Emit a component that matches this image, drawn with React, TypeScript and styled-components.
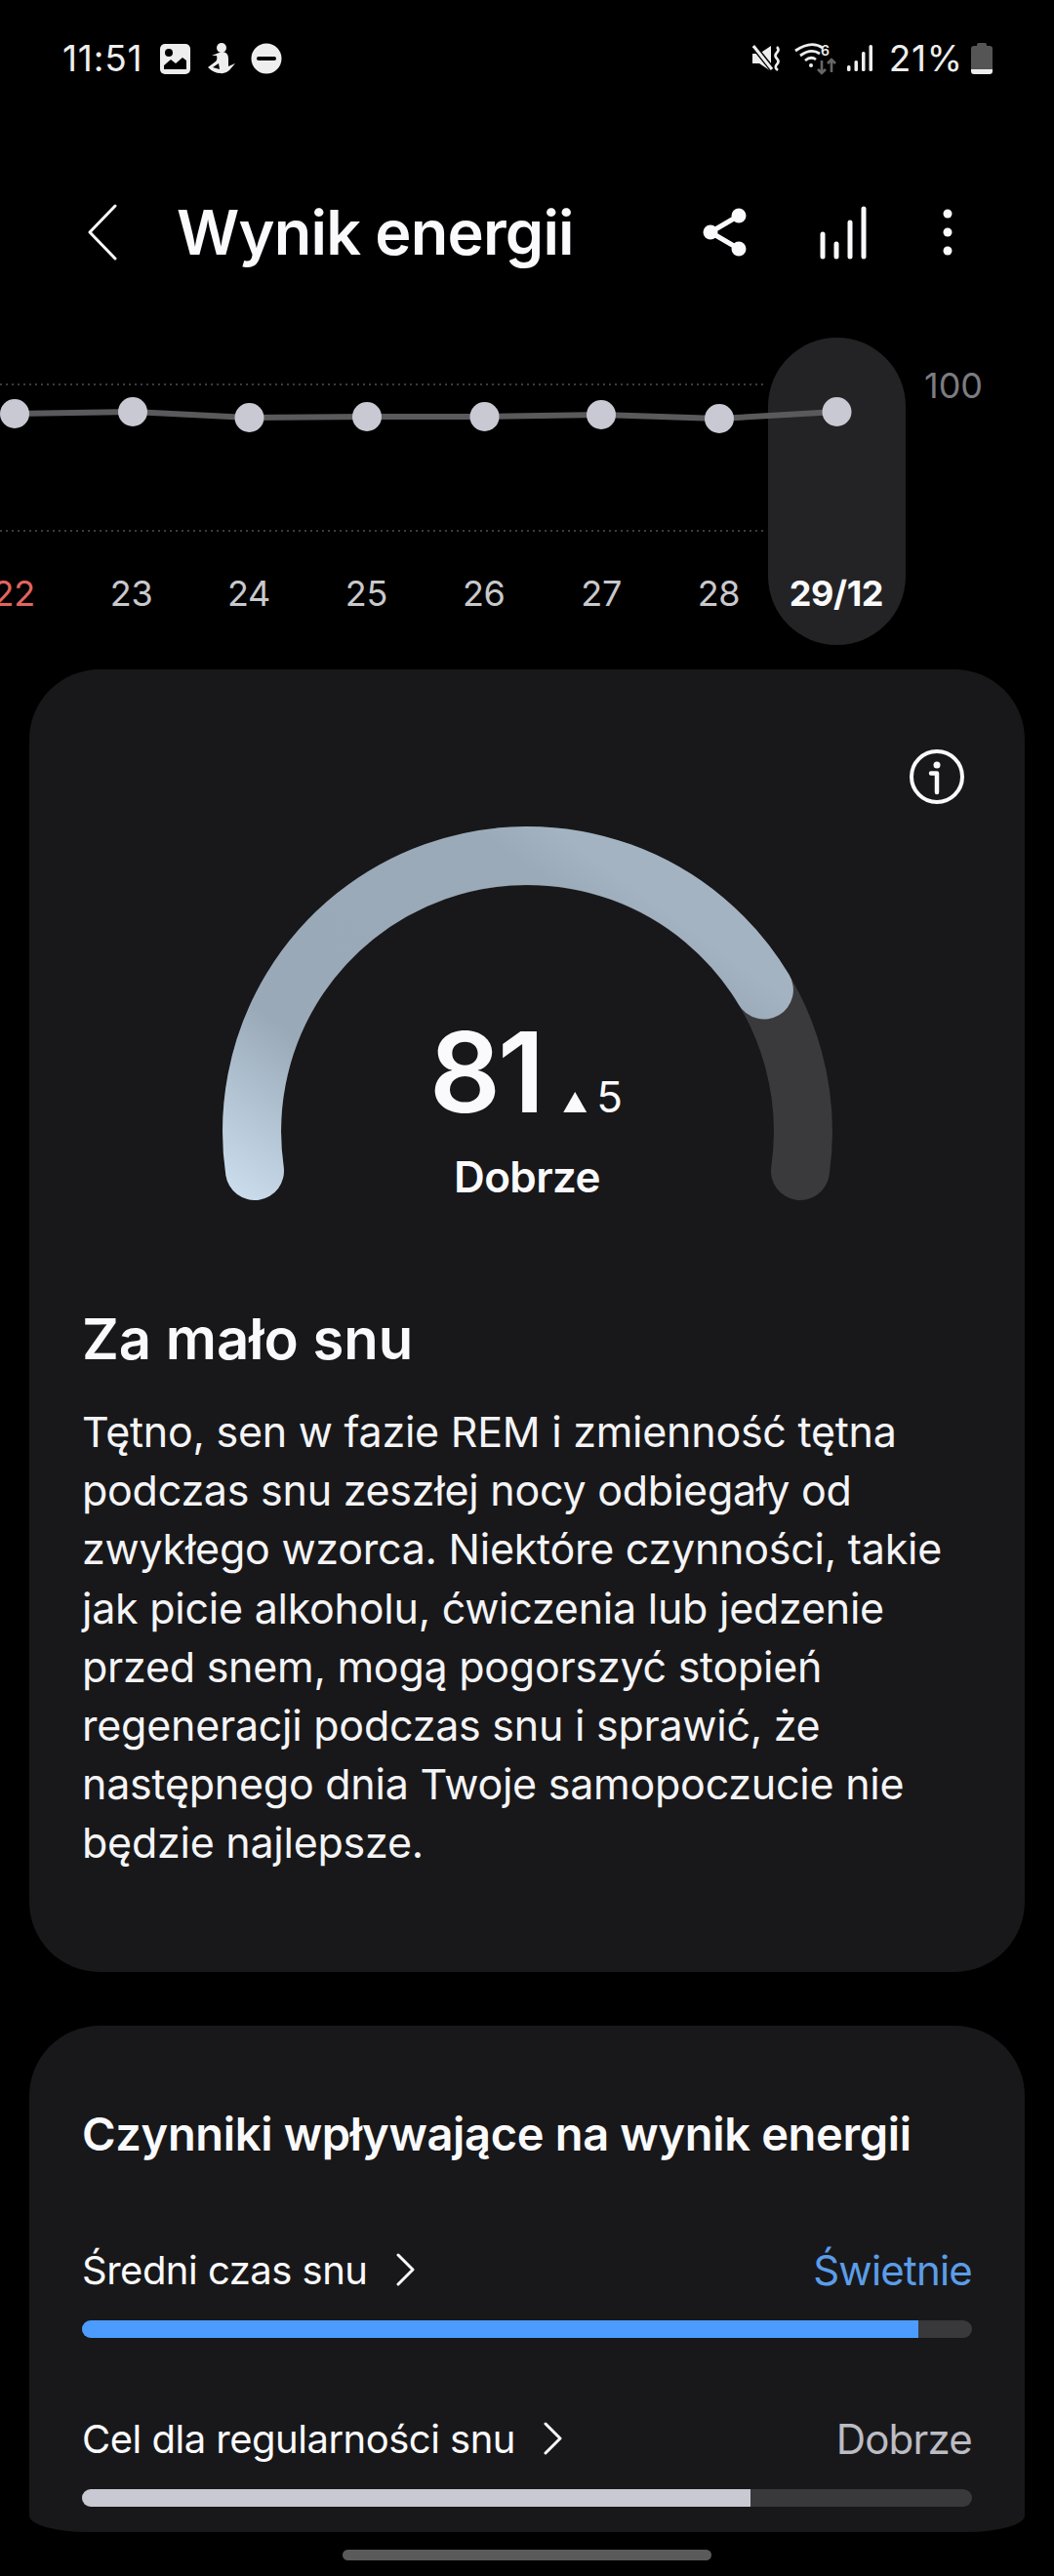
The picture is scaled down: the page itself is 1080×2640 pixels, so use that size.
import React from "react";
import styled, { createGlobalStyle } from "styled-components";

const FONT = `Inter, "Noto Sans", sans-serif`;

const GlobalStyle = createGlobalStyle`
  html, body {
    margin: 0;
    padding: 0;
    background: #000;
  }
  * {
    box-sizing: border-box;
  }
`;

const Page = styled.div`
  width: 1080px;
  height: 2640px;
  position: relative;
  overflow: hidden;
  background: #000;
  font-family: ${FONT};
  color: #fafafc;
`;

const StatusBar = styled.div`
  height: 116px;
  padding: 42px 63px 0 64px;
  display: flex;
  align-items: flex-start;
  justify-content: space-between;
`;

const StatusGroup = styled.div`
  height: 36px;
  display: flex;
  align-items: center;
  color: #eeeeee;
`;

const StatusText = styled.span`
  font-size: 37px;
  letter-spacing: 0.8px;
  line-height: 36px;
`;

const LeftIcons = styled.svg`
  margin-left: 17px;
`;

const RightIcons = styled.svg`
  margin-right: 16px;
`;

const Battery = styled.svg`
  margin-left: 8px;
`;

const TopBar = styled.div`
  height: 176px;
  padding: 68px 100px 0 90px;
  display: flex;
  align-items: center;
`;

const Title = styled.h1`
  margin: 0 0 0 61px;
  font-size: 63px;
  font-weight: 600;
  letter-spacing: -0.8px;
  flex: 1;
`;

const Chart = styled.div`
  position: relative;
  height: 394px;
`;

const Highlight = styled.div`
  position: absolute;
  left: 787px;
  top: 54px;
  width: 141px;
  height: 315px;
  border-radius: 71px;
  background: #232325;
`;

const ChartLines = styled.svg`
  position: absolute;
  left: 0;
  top: 0;
`;

const MaxLabel = styled.span`
  position: absolute;
  left: 947px;
  top: 81px;
  font-size: 36px;
  line-height: 44px;
  color: #7c7c80;
`;

const DayRow = styled.div`
  position: absolute;
  left: -46px;
  top: 294px;
  display: grid;
  grid-template-columns: repeat(8, 120.4px);
`;

const Day = styled.span<{ $tone?: "red" | "active" }>`
  text-align: center;
  font-size: 36px;
  line-height: 44px;
  font-weight: ${(p) => (p.$tone === "active" ? 700 : 400)};
  letter-spacing: ${(p) => (p.$tone === "active" ? "-0.4px" : "-0.3px")};
  color: ${(p) =>
    p.$tone === "red" ? "#e2655f" : p.$tone === "active" ? "#fafafc" : "#c9c9cc"};
`;

const Card = styled.section`
  margin: 0 30px;
  background: #18181a;
  border-radius: 72px;
`;

const ScoreCard = styled(Card)`
  height: 1335px;
  padding: 154px 54px 0;
  position: relative;
`;

const InfoButton = styled.svg`
  position: absolute;
  right: 62px;
  top: 82px;
`;

const Gauge = styled.div`
  position: relative;
  width: 640px;
  height: 400px;
  margin: 0 auto;
`;

const GaugeSvg = styled.svg`
  display: block;
`;

const GaugeCenter = styled.div`
  position: absolute;
  left: 0;
  right: 0;
  top: 199px;
  display: flex;
  flex-direction: column;
  align-items: center;
`;

const ScoreRow = styled.div`
  display: flex;
  align-items: baseline;
  padding-right: 2px;
`;

const Score = styled.span`
  font-size: 114px;
  font-weight: 600;
  line-height: 120px;
  letter-spacing: -3px;
`;

const DeltaArrow = styled.span`
  width: 24px;
  height: 21px;
  margin: 0 10px 0 22px;
  background: #fafafc;
  clip-path: polygon(50% 0, 100% 100%, 0 100%);
`;

const Delta = styled.span`
  font-size: 44px;
  line-height: 44px;
`;

const ScoreLabel = styled.span`
  font-size: 44px;
  font-weight: 600;
  line-height: 56px;
  margin-top: 19px;
  letter-spacing: -0.6px;
`;

const Message = styled.div`
  margin-top: 97px;
`;

const MessageTitle = styled.h2`
  margin: 0;
  font-size: 58px;
  line-height: 70px;
  font-weight: 600;
`;

const MessageBody = styled.p`
  margin: 30px 0 0;
  font-size: 43px;
  line-height: 60.2px;
  font-weight: 400;
  letter-spacing: -0.25px;
  color: #f4f4f6;
  white-space: pre-line;
`;

const FactorsCard = styled(Card)`
  margin-top: 55px;
  height: 519px;
  padding: 80px 54px 0;
  border-radius: 72px 72px 60px 60px / 72px 72px 17px 17px;
`;

const FactorsTitle = styled.h2`
  margin: 0 0 80px;
  font-size: 47px;
  line-height: 62px;
  font-weight: 600;
  letter-spacing: -0.33px;
`;

const Factor = styled.div`
  margin-bottom: 75px;
`;

const FactorHead = styled.div`
  height: 56px;
  display: flex;
  align-items: center;
  justify-content: space-between;
  margin-bottom: 24px;
`;

const FactorName = styled.div`
  display: flex;
  align-items: center;
  gap: 28px;
  font-size: 40px;
  letter-spacing: -0.5px;
`;

const FactorRating = styled.span<{ $color: string }>`
  font-size: 42px;
  letter-spacing: -0.8px;
  color: ${(p) => p.$color};
`;

const Track = styled.div`
  height: 18px;
  border-radius: 9px;
  overflow: hidden;
  background: #39393b;
`;

const Fill = styled.div<{ $color: string }>`
  height: 100%;
  background: ${(p) => p.$color};
`;

const HomeIndicator = styled.div`
  position: absolute;
  left: 351px;
  top: 2613px;
  width: 378px;
  height: 11px;
  border-radius: 6px;
  background: #5a5a5a;
`;

const days = ["22", "23", "24", "25", "26", "27", "28", "29/12"];
const points = [
  [15, 424],
  [136, 422],
  [255.5, 428],
  [376, 427],
  [496.5, 427],
  [616, 425],
  [737, 429],
  [857.5, 422],
];

const factors = [
  { name: "Średni czas snu", rating: "Świetnie", ratingColor: "#5b9de8", fill: "#4c9cff", pct: 94 },
  { name: "Cel dla regularności snu", rating: "Dobrze", ratingColor: "#bcbcc4", fill: "#c8c9d3", pct: 75.1 },
];

const body = `Tętno, sen w fazie REM i zmienność tętna
podczas snu zeszłej nocy odbiegały od
zwykłego wzorca. Niektóre czynności, takie
jak picie alkoholu, ćwiczenia lub jedzenie
przed snem, mogą pogorszyć stopień
regeneracji podczas snu i sprawić, że
następnego dnia Twoje samopoczucie nie
będzie najlepsze.`;

function LeftStatusIcons() {
  return (
    <LeftIcons width="130" height="36" viewBox="0 0 130 36">
      <rect x="1" y="3" width="31" height="31" rx="5" fill="#eee" />
      <circle cx="10" cy="12" r="4" fill="#000" />
      <path d="M5 29 v-4 l7-6 5 4 7-6 4 3 v9 z" fill="#000" />
      <circle cx="64" cy="7" r="5" fill="#eee" />
      <path d="M54 15 L64 11 Q71 11 71 18 L71 26 L78 23 L72 30 Q68 34 63 33 Q56 33 50 27 L58 21 Q60 19 59 15 Z" fill="#eee" />
      <path d="M55 27 L61 23 L62 29 Z" fill="#000" />
      <circle cx="110" cy="18" r="15.5" fill="#eee" />
      <rect x="100" y="16" width="20" height="4" rx="2" fill="#000" />
    </LeftIcons>
  );
}

function RightStatusIcons() {
  return (
    <RightIcons width="124" height="36" viewBox="0 0 124 36">
      <path d="M0 13 h7 l12-8 v26 l-12-8 h-7 z" fill="#eee" />
      <path d="M1 5 L21 30" stroke="#000" strokeWidth="6" />
      <path d="M1 5 L20 29" stroke="#eee" strokeWidth="3" />
      <path d="M25 6 q3 3 0 6 q-3 3 0 6 q3 3 0 6 q-3 3 1 6" stroke="#eee" strokeWidth="2.6" fill="none" />
      <path d="M44 10 Q60 -1 72 7 M49 15 Q60 7 69 13 M54 20 Q60 15 65 19" stroke="#eee" strokeWidth="2.8" fill="none" />
      <circle cx="60" cy="25" r="2" fill="#eee" />
      <text x="70" y="15" fontSize="14" fontWeight="600" fill="#eee" fontFamily={FONT}>6</text>
      <path d="M71 20 v13 M67 29 l4 4 4-4" stroke="#666" strokeWidth="2.6" fill="none" />
      <path d="M81 32 v-13 M77 23 l4-4 4 4" stroke="#666" strokeWidth="2.6" fill="none" />
      <rect x="97" y="25" width="3.5" height="6" rx="1.5" fill="#eee" />
      <rect x="104.5" y="20" width="3.5" height="11" rx="1.5" fill="#eee" />
      <rect x="112" y="11" width="3.5" height="20" rx="1.5" fill="#eee" />
      <rect x="119.5" y="4" width="3.5" height="27" rx="1.5" fill="#eee" />
    </RightIcons>
  );
}

function BatteryIcon() {
  return (
    <Battery width="22" height="32" viewBox="0 0 22 32">
      <path d="M6 2 q0-2 2-2 h6 q2 0 2 2 v1 h3 q3 0 3 3 v21 h-22 v-21 q0-3 3-3 h3 z" fill="#555" />
      <path d="M0 27 h22 v2 q0 3 -3 3 h-16 q-3 0 -3-3 z" fill="#eee" />
    </Battery>
  );
}

function HeaderIcons() {
  return (
    <svg width="262" height="60" viewBox="0 0 262 60">
      <g transform="translate(-718,-208)">
        <path d="M728 238 L757 221 M728 238 L757 255" stroke="#fafafc" strokeWidth="5" />
        <circle cx="728" cy="238" r="7.5" fill="#fafafc" />
        <circle cx="757" cy="221" r="7.5" fill="#fafafc" />
        <circle cx="757" cy="255" r="7.5" fill="#fafafc" />
        <g stroke="#fafafc" strokeWidth="5" strokeLinecap="round">
          <path d="M843 240 V263" />
          <path d="M857 250 V263" />
          <path d="M871 228 V263" />
          <path d="M885 214 V263" />
        </g>
        <circle cx="971" cy="219" r="4.5" fill="#fafafc" />
        <circle cx="971" cy="238" r="4.5" fill="#fafafc" />
        <circle cx="971" cy="257" r="4.5" fill="#fafafc" />
      </g>
    </svg>
  );
}

function Chevron() {
  return (
    <svg width="22" height="34" viewBox="0 0 22 34">
      <path d="M3 2 L18 17 L3 32" fill="none" stroke="#fafafc" strokeWidth="3" strokeLinecap="round" strokeLinejoin="round" />
    </svg>
  );
}

export default function App() {
  return (
    <Page>
      <GlobalStyle />
      <StatusBar>
        <StatusGroup>
          <StatusText>11:51</StatusText>
          <LeftStatusIcons />
        </StatusGroup>
        <StatusGroup>
          <RightStatusIcons />
          <StatusText>21%</StatusText>
          <BatteryIcon />
        </StatusGroup>
      </StatusBar>
      <TopBar>
        <svg width="30" height="58" viewBox="0 0 30 58">
          <path d="M28 2 L2 29 L28 56" fill="none" stroke="#fafafc" strokeWidth="3" strokeLinecap="round" strokeLinejoin="round" />
        </svg>
        <Title>Wynik energii</Title>
        <HeaderIcons />
      </TopBar>
      <Chart>
        <Highlight />
        <ChartLines width="1080" height="394" viewBox="0 292 1080 394">
          <path d="M0 394 H785 M0 544 H785" stroke="#3c3c3e" strokeWidth="2" strokeDasharray="2 4" />
          <polyline points={points.map((p) => p.join(",")).join(" ")} fill="none" stroke="#5a5a5c" strokeWidth="6" />
          {points.map(([x, y]) => (
            <circle key={x} cx={x} cy={y} r="15" fill="#c8c9d3" />
          ))}
        </ChartLines>
        <MaxLabel>100</MaxLabel>
        <DayRow>
          {days.map((d, i) => (
            <Day key={d} $tone={i === 0 ? "red" : i === 7 ? "active" : undefined}>{d}</Day>
          ))}
        </DayRow>
      </Chart>
      <ScoreCard>
        <InfoButton width="56" height="56" viewBox="0 0 56 56">
          <circle cx="28" cy="28" r="26" fill="none" stroke="#fafafc" strokeWidth="4" />
          <circle cx="28" cy="16" r="3.5" fill="#fafafc" />
          <path d="M22 24.5 H28 V44" fill="none" stroke="#fafafc" strokeWidth="4.5" strokeLinecap="round" strokeLinejoin="round" />
        </InfoButton>
        <Gauge>
          <GaugeSvg width="640" height="400" viewBox="220 840 640 400">
            <defs>
              <linearGradient id="gaugeFill" gradientUnits="userSpaceOnUse" x1="260" y1="1230" x2="548" y2="834">
                <stop offset="0" stopColor="#c9dbeb" />
                <stop offset="0.33" stopColor="#99a9b8" />
                <stop offset="0.9" stopColor="#9aaab9" />
                <stop offset="1" stopColor="#a3b3c2" />
              </linearGradient>
            </defs>
            <path d="M261 1200 A282.4 282.4 0 1 1 820 1200" fill="none" stroke="#3a3a3c" strokeWidth="60" strokeLinecap="round" />
            <path d="M261 1200 A282.4 282.4 0 0 1 782.9 1014.5" fill="none" stroke="url(#gaugeFill)" strokeWidth="60" strokeLinecap="round" />
          </GaugeSvg>
          <GaugeCenter>
            <ScoreRow>
              <Score>81</Score>
              <DeltaArrow />
              <Delta>5</Delta>
            </ScoreRow>
            <ScoreLabel>Dobrze</ScoreLabel>
          </GaugeCenter>
        </Gauge>
        <Message>
          <MessageTitle>Za mało snu</MessageTitle>
          <MessageBody>{body}</MessageBody>
        </Message>
      </ScoreCard>
      <FactorsCard>
        <FactorsTitle>Czynniki wpływające na wynik energii</FactorsTitle>
        {factors.map((f) => (
          <Factor key={f.name}>
            <FactorHead>
              <FactorName>
                {f.name}
                <Chevron />
              </FactorName>
              <FactorRating $color={f.ratingColor}>{f.rating}</FactorRating>
            </FactorHead>
            <Track>
              <Fill $color={f.fill} style={{ width: `${f.pct}%` }} />
            </Track>
          </Factor>
        ))}
      </FactorsCard>
      <HomeIndicator />
    </Page>
  );
}
